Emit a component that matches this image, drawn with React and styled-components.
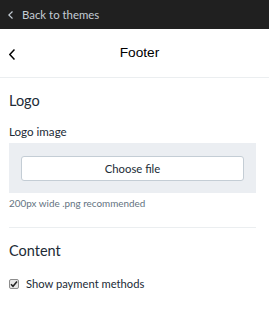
import React from "react";
import styled, { createGlobalStyle } from "styled-components";

const Global = createGlobalStyle`
  html, body { margin: 0; padding: 0; background: #fff; }
  body { font-family: Lato, "Noto Sans", sans-serif; color: #212b36; }
  * { box-sizing: border-box; }
`;

const Page = styled.div`
  width: 269px;
  height: 309px;
  display: flex;
  flex-direction: column;
  background: #fff;
`;

const TopBar = styled.div`
  height: 29px;
  background: #202020;
  display: flex;
  align-items: center;
  padding-left: 8px;
  gap: 9px;
  color: #c4cdd5;
  font-size: 11.4px;
  flex-shrink: 0;
`;

const Header = styled.div`
  height: 49px;
  display: flex;
  align-items: center;
  position: relative;
  justify-content: center;
  padding-left: 10px;
  border-bottom: 1px solid #ebeef0;
  flex-shrink: 0;
`;

const BackButton = styled.div`
  position: absolute;
  left: 9px;
  top: 20px;
  display: flex;
`;

const Title = styled.div`
  font-family: "Liberation Sans", Arial, sans-serif;
  font-size: 13.7px;
  color: #000;
  margin-top: -1px;
`;

const Body = styled.div`
  padding: 0 13px 0 9px;
  display: flex;
  flex-direction: column;
`;

const Section = styled.div`
  display: flex;
  flex-direction: column;
  padding: ${(p) => p.$pad};
  border-bottom: ${(p) => (p.$divider ? "1px solid #ebeef0" : "none")};
`;

const Heading = styled.div`
  font-size: 14.5px;
  color: #212b36;
  line-height: 18px;
`;

const Label = styled.div`
  font-size: 11.6px;
  margin-top: 15px;
  line-height: 14px;
`;

const UploadBox = styled.div`
  margin-top: 4px;
  background: #ebeef2;
  padding: 13px 12px 12px;
`;

const ChooseButton = styled.div`
  height: 25px;
  background: #fff;
  border: 1px solid #c4cdd5;
  border-radius: 3px;
  display: flex;
  align-items: center;
  justify-content: center;
  font-size: 11.3px;
  color: #212b36;
`;

const Help = styled.div`
  font-size: 9.9px;
  color: #637381;
  margin-top: 4px;
  line-height: 12px;
`;

const CheckRow = styled.label`
  display: flex;
  align-items: center;
  gap: 7px;
  margin-top: 17px;
  font-size: 11.2px;
  line-height: 14px;
`;

const Box = styled.span`
  width: 10px;
  height: 10px;
  border: 1px solid #8d8d8d;
  border-radius: 2px;
  background: #e6e6e6;
  display: flex;
  align-items: center;
  justify-content: center;
`;

const Chevron = ({ w, h, color, stroke }) => (
  <svg width={w} height={h} viewBox={`0 0 ${w} ${h}`} fill="none">
    <path
      d={`M${w - 0.5} 0.5 L0.8 ${h / 2} L${w - 0.5} ${h - 0.5}`}
      stroke={color}
      strokeWidth={stroke}
    />
  </svg>
);

export default function App() {
  return (
    <Page>
      <Global />
      <TopBar>
        <Chevron w={5} h={8} color="#c4cdd5" stroke={1.2} />
        <span>Back to themes</span>
      </TopBar>
      <Header>
        <BackButton>
          <Chevron w={6} h={11} color="#000" stroke={1.5} />
        </BackButton>
        <Title>Footer</Title>
      </Header>
      <Body>
        <Section $divider $pad="14px 0 18px">
          <Heading>Logo</Heading>
          <Label>Logo image</Label>
          <UploadBox>
            <ChooseButton>Choose file</ChooseButton>
          </UploadBox>
          <Help>200px wide .png recommended</Help>
        </Section>
        <Section $pad="14px 0 0">
          <Heading>Content</Heading>
          <CheckRow>
            <Box>
              <svg width="8" height="8" viewBox="0 0 8 8">
                <path d="M1 4.2 L3 6.3 L7 1.5" stroke="#222" strokeWidth="1.5" fill="none" />
              </svg>
            </Box>
            <span>Show payment methods</span>
          </CheckRow>
        </Section>
      </Body>
    </Page>
  );
}
